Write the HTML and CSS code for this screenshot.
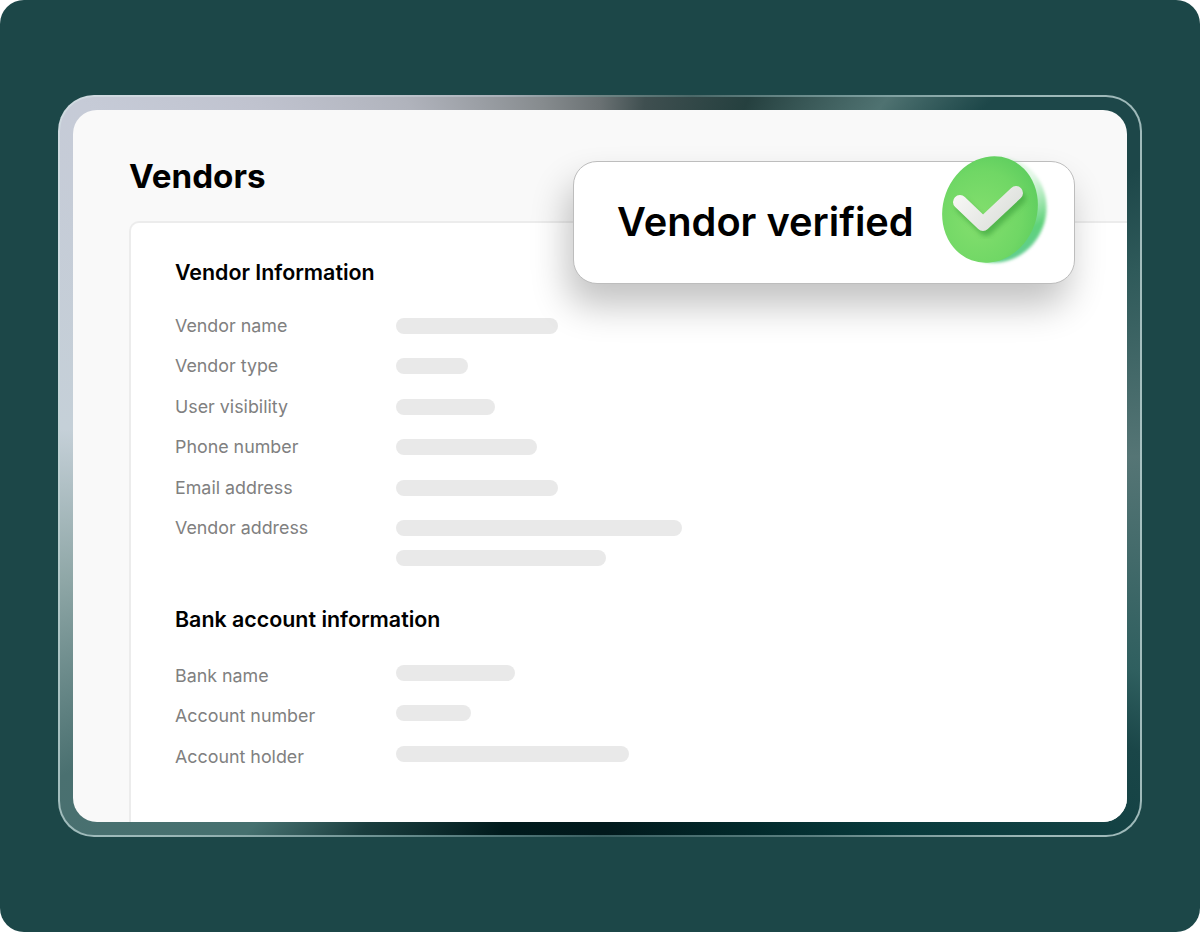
FILE: index.html
```html
<!DOCTYPE html>
<html lang="en">
<head>
<meta charset="utf-8">
<title>Vendors</title>
<link rel="stylesheet" href="styles.css">
</head>
<body>
<main class="stage">
  <div class="frame">
    <section class="panel">
      <h1 class="title">Vendors</h1>
      <div class="card">
        <h2 class="heading">Vendor Information</h2>
        <div class="rows">
          <div class="row"><span class="label">Vendor name</span><span class="bar w162"></span></div>
          <div class="row"><span class="label">Vendor type</span><span class="bar w72"></span></div>
          <div class="row"><span class="label">User visibility</span><span class="bar w99"></span></div>
          <div class="row"><span class="label">Phone number</span><span class="bar w141"></span></div>
          <div class="row"><span class="label">Email address</span><span class="bar w162"></span></div>
          <div class="row multi"><span class="label">Vendor address</span><span class="bars"><span class="bar w286"></span><span class="bar w210"></span></span></div>
        </div>
        <h2 class="heading second">Bank account information</h2>
        <div class="rows raised">
          <div class="row"><span class="label">Bank name</span><span class="bar w119"></span></div>
          <div class="row"><span class="label">Account number</span><span class="bar w75"></span></div>
          <div class="row"><span class="label">Account holder</span><span class="bar w233"></span></div>
        </div>
      </div>
    </section>
  </div>
  <div class="toast">
    <span class="toast-text">Vendor verified</span>
    <svg class="badge" viewBox="0 0 110 116" aria-hidden="true">
      <defs>
        <linearGradient id="rim" x1="0" y1="0" x2="1" y2="1">
          <stop offset="0.4" stop-color="#8fe2a0" stop-opacity="0.25"/>
          <stop offset="0.72" stop-color="#5fd27a"/>
          <stop offset="1" stop-color="#63c9a6"/>
        </linearGradient>
        <radialGradient id="face" cx="0.42" cy="0.62" r="0.65">
          <stop offset="0" stop-color="#84df6e"/>
          <stop offset="0.7" stop-color="#70d765"/>
          <stop offset="1" stop-color="#5fce5f"/>
        </radialGradient>
        <filter id="soft" x="-20%" y="-20%" width="140%" height="140%"><feGaussianBlur stdDeviation="1.5"/></filter>
        <filter id="shade" x="-30%" y="-30%" width="160%" height="160%"><feGaussianBlur stdDeviation="2.5"/></filter>
        <linearGradient id="tick" gradientUnits="userSpaceOnUse" x1="20" y1="40" x2="60" y2="76">
          <stop offset="0" stop-color="#f6f6f4"/>
          <stop offset="1" stop-color="#dde0dc"/>
        </linearGradient>
      </defs>
      <ellipse cx="57" cy="55" rx="49" ry="53" transform="rotate(20 57 55)" fill="url(#rim)" filter="url(#soft)"/>
      <ellipse cx="50" cy="54.5" rx="47" ry="54" transform="rotate(20 50 54.5)" fill="url(#face)"/>
      <path d="M20 47 L43 69 L76 38" fill="none" stroke="#47ad45" stroke-opacity="0.8" stroke-width="14" stroke-linecap="round" stroke-linejoin="round" filter="url(#shade)" transform="translate(3 5)"/>
      <path d="M20 47 L43 69 L76 38" fill="none" stroke="url(#tick)" stroke-width="14" stroke-linecap="round" stroke-linejoin="round"/>
    </svg>
  </div>
</main>
</body>
</html>
```
FILE: styles.css
```css
* { box-sizing: border-box; }
html, body { margin: 0; padding: 0; background: #fff; }
body { width: 1200px; height: 932px; overflow: hidden; font-family: Inter, "Liberation Sans", sans-serif; }

.stage {
  position: relative;
  width: 1200px;
  height: 932px;
  padding: 95px 58px 95px 58px;
  background: #1c4748;
  border-radius: 24px;
  overflow: hidden;
}

.frame {
  height: 742px;
  padding: 13px;
  border: 2px solid transparent;
  border-radius: 36px;
  background:
    conic-gradient(from 0deg at 50% 50%,
      #6a7173 0deg, #3f4f50 7deg, #25403f 22deg, #4f7271 38deg, #1d4749 47deg,
      #1d4749 61deg, #2f5a5a 70deg, #557575 89deg, #2f5f5f 111deg, #1a4648 118deg,
      #0f3f41 130deg, #083a3c 141deg, #022a2c 157deg, #01191c 179deg,
      #001a1c 195deg, #1a3d3e 213deg, #45706f 224deg, #4a7070 240deg,
      #8fa7a7 258deg, #c5d0d8 274deg, #c6cbd7 305deg, #c0c3cf 316deg,
      #b0b3bc 332deg, #868b8e 351deg, #6a7173 360deg) padding-box,
    conic-gradient(from 0deg at 50% 50%,
      #6f8585 0deg, #4a6868 14deg, #7a9c9c 36deg, #9db8b8 50deg,
      #a8c2c2 90deg, #9db8b8 130deg, #5a7f80 150deg, #3a6062 180deg,
      #5f8586 205deg, #9bb8b8 230deg, #b4caca 260deg, #d0dde2 290deg,
      #cfd6de 320deg, #a9b0b8 345deg, #6f8585 360deg) border-box;
}

.panel {
  height: 712px;
  padding-top: 46px;
  padding-left: 56px;
  background: #f9f9f9;
  border-radius: 24px;
  overflow: hidden;
}

.title {
  margin: 0 0 24px;
  font-size: 33.2px;
  line-height: 41px;
  font-weight: 700;
  color: #000;
}

.card {
  height: 610px;
  padding: 35px 0 0 44px;
  background: #fff;
  border: 2px solid #ececec;
  border-right: 0;
  border-bottom: 0;
  border-top-left-radius: 10px;
}

.heading {
  margin: 0 0 30px;
  font-size: 21.4px;
  line-height: 28px;
  font-weight: 600;
  color: #000;
}
.heading.second { margin-top: 37px; margin-bottom: 33px; }

.rows { display: flex; flex-direction: column; gap: 20.4px; }

.row { display: flex; align-items: center; height: 20px; }
.row.multi { align-items: flex-start; height: 50px; }

.label {
  width: 220.5px;
  flex: none;
  font-size: 17.85px;
  line-height: 20px;
  color: #808080;
}

.bars { display: flex; flex-direction: column; gap: 14px; padding-top: 2px; }
.bar { display: block; height: 16px; border-radius: 8px; background: #e9e9e9; }
.raised .bar { margin-bottom: 6px; }
.w72 { width: 72px; }
.w75 { width: 75px; }
.w99 { width: 99px; }
.w119 { width: 119px; }
.w141 { width: 141px; }
.w162 { width: 162px; }
.w210 { width: 210px; }
.w233 { width: 233px; }
.w286 { width: 286px; }

.toast {
  position: absolute;
  left: 573px;
  top: 161px;
  width: 502px;
  height: 123px;
  display: flex;
  align-items: center;
  padding: 0 0 2px 43px;
  background: #fff;
  border: 1px solid #bdbdbd;
  border-radius: 24px;
  box-shadow: -6px 22px 36px rgba(0, 0, 0, 0.24);
}

.toast-text {
  font-size: 39.8px;
  line-height: 48px;
  font-weight: 600;
  color: #000;
}

.badge {
  position: absolute;
  left: 366px;
  top: -7px;
  width: 110px;
  height: 116px;
}
```
